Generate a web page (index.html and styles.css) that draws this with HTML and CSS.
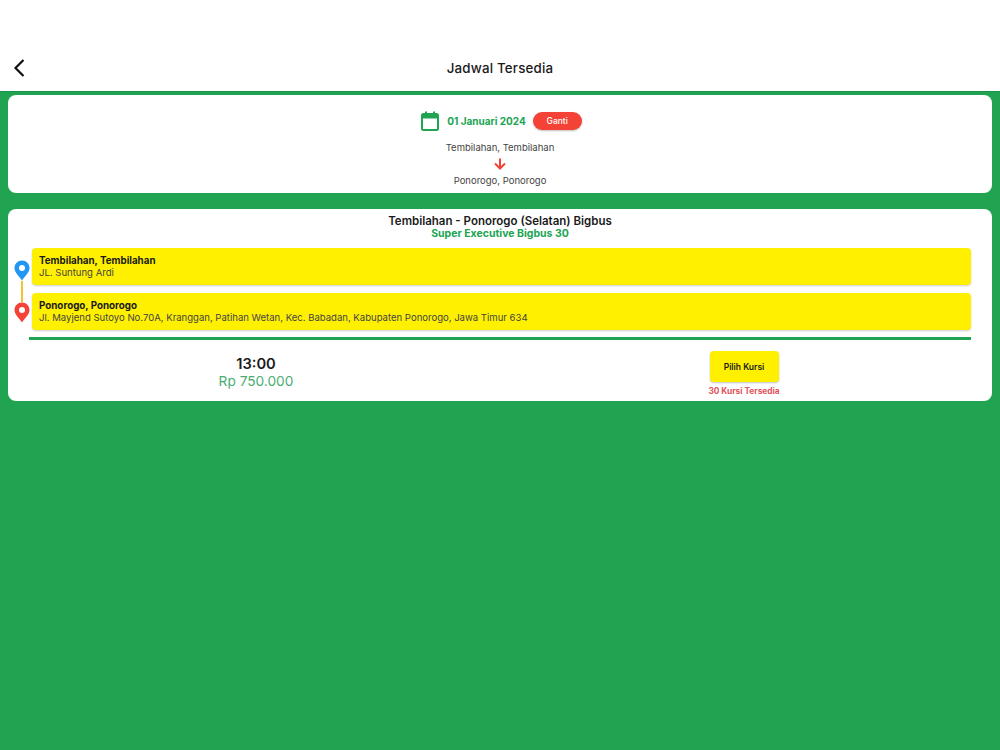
FILE: index.html
```html
<!DOCTYPE html>
<html lang="en">
<head>
  <meta charset="UTF-8">
  <title>Jadwal Tersedia</title>
  <link rel="stylesheet" href="styles.css">
</head>
<body>
  <header class="topbar">
    <svg class="backIcon" width="24" height="24" viewBox="0 0 24 24">
      <path d="M16.5 4 L8.5 12 L16.5 20" fill="none" stroke="#111" stroke-width="2.2"/>
    </svg>
    <h1 class="topbarTitle">Jadwal Tersedia</h1>
  </header>

  <section class="card dateCard">
    <div class="dateRow">
      <svg class="calIcon" width="24" height="24" viewBox="0 0 24 24">
        <rect x="4" y="5" width="16" height="16" rx="1.5" fill="none" stroke="#20a452" stroke-width="2"/>
        <rect x="4" y="5" width="16" height="4.5" fill="#20a452"/>
        <rect x="7" y="2.5" width="2" height="4" fill="#20a452"/>
        <rect x="15" y="2.5" width="2" height="4" fill="#20a452"/>
      </svg>
      <span class="dateText">01 Januari 2024</span>
      <span class="gantiBtn">Ganti</span>
    </div>
    <div class="routeText routeFrom">Tembilahan, Tembilahan</div>
    <svg class="arrowIcon" width="14" height="14" viewBox="0 0 14 14">
      <path d="M7 1.5 V11.5 M2 6.5 L7 11.5 L12 6.5" fill="none" stroke="#f44336" stroke-width="2"/>
    </svg>
    <div class="routeText routeTo">Ponorogo, Ponorogo</div>
  </section>

  <section class="card tripCard">
    <div class="tripTitle">Tembilahan - Ponorogo (Selatan) Bigbus</div>
    <div class="tripClass">Super Executive Bigbus 30</div>

    <div class="stops">
      <div class="pinCol">
        <svg class="pin" width="16" height="21" viewBox="0 0 16 21">
          <path d="M8 0.5 C3.8 0.5 0.5 3.8 0.5 8 C0.5 12.5 5 16 8 20.5 C11 16 15.5 12.5 15.5 8 C15.5 3.8 12.2 0.5 8 0.5 Z" fill="#2196f3"/>
          <circle cx="8" cy="8" r="3" fill="#fff"/>
        </svg>
        <div class="pinLine"></div>
        <svg class="pin" width="16" height="21" viewBox="0 0 16 21">
          <path d="M8 0.5 C3.8 0.5 0.5 3.8 0.5 8 C0.5 12.5 5 16 8 20.5 C11 16 15.5 12.5 15.5 8 C15.5 3.8 12.2 0.5 8 0.5 Z" fill="#f44336"/>
          <circle cx="8" cy="8" r="3" fill="#fff"/>
        </svg>
      </div>
      <div class="stopList">
        <div class="stop">
          <div class="stopName">Tembilahan, Tembilahan</div>
          <div class="stopAddr">JL. Suntung Ardi</div>
        </div>
        <div class="stop">
          <div class="stopName">Ponorogo, Ponorogo</div>
          <div class="stopAddr">Jl. Mayjend Sutoyo No.70A, Kranggan, Patihan Wetan, Kec. Babadan, Kabupaten Ponorogo, Jawa Timur 634</div>
        </div>
      </div>
    </div>

    <div class="divider"></div>

    <div class="tripBottom">
      <div class="tripCol">
        <div class="tripTime">13:00</div>
        <div class="tripPrice">Rp 750.000</div>
      </div>
      <div class="tripCol">
        <div class="pilihBtn">Pilih Kursi</div>
        <div class="seatText">30 Kursi Tersedia</div>
      </div>
    </div>
  </section>
</body>
</html>
```

FILE: styles.css
```css
*{
  box-sizing: border-box;
}
html, body{
  height: 100%;
}
body{
  margin: 0;
  background-color: #20a452;
  font-family: Inter, "Liberation Sans", sans-serif;
  color: #1a1a1a;
}
.topbar{
  height: 92px;
  padding-top: 44px;
  background-color: #fff;
  display: flex;
  align-items: center;
  justify-content: center;
  position: relative;
  border-bottom: 1px solid #1c9149;
}
.backIcon{
  position: absolute;
  left: 7px;
  top: 56px;
}
.topbarTitle{
  margin: 0;
  font-size: 13.3px;
  font-weight: 500;
  letter-spacing: 0.2px;
}
.card{
  background-color: #fff;
  margin: 0 8px;
  border-radius: 8px;
}
.dateCard{
  margin-top: 3px;
  height: 98px;
  padding-top: 16px;
  display: flex;
  flex-direction: column;
  align-items: center;
}
.dateRow{
  display: flex;
  align-items: center;
  height: 20px;
}
.calIcon{
  margin-right: 5px;
}
.dateText{
  font-size: 10px;
  font-weight: 700;
  color: #20a452;
  margin-right: 7px;
}
.gantiBtn{
  width: 49px;
  height: 18px;
  border-radius: 9px;
  background-color: #f44336;
  color: #fff;
  font-size: 8.5px;
  font-weight: 500;
  display: flex;
  align-items: center;
  justify-content: center;
  box-shadow: 0 1px 2px rgba(0,0,0,.25);
}
.routeText{
  font-size: 9.5px;
  line-height: 14px;
  color: #444;
}
.routeFrom{
  margin-top: 10px;
}
.arrowIcon{
  margin-top: 2px;
}
.routeTo{
  margin-top: 3px;
}
.tripCard{
  margin-top: 16px;
  height: 192px;
  padding-top: 6px;
}
.tripTitle{
  text-align: center;
  font-size: 11.5px;
  line-height: 12px;
  font-weight: 600;
}
.tripClass{
  text-align: center;
  font-size: 10.5px;
  line-height: 13px;
  font-weight: 700;
  color: #20a452;
}
.stops{
  display: flex;
  margin-top: 8px;
  padding: 0 21px 0 6px;
}
.pinCol{
  width: 16px;
  margin-right: 2px;
  padding-top: 12px;
  display: flex;
  flex-direction: column;
  align-items: center;
}
.pin{
  display: block;
  flex: none;
}
.pinLine{
  width: 2px;
  height: 21px;
  background-color: #f2c230;
}
.stopList{
  flex: 1;
  display: flex;
  flex-direction: column;
  gap: 8px;
}
.stop{
  height: 37px;
  padding: 7px 7px;
  background-color: #fff000;
  border-radius: 4px;
  box-shadow: 0 1px 2px rgba(0,0,0,.2);
  line-height: 12px;
}
.stopName{
  font-size: 9.8px;
  font-weight: 700;
}
.stopAddr{
  font-size: 9.56px;
  color: #444;
}
.divider{
  height: 3px;
  margin: 7px 21px 0 21px;
  background-color: #20a452;
}
.tripBottom{
  display: flex;
  padding: 0 4px;
}
.tripCol{
  flex: 1;
  display: flex;
  flex-direction: column;
  align-items: center;
}
.tripTime{
  margin-top: 16px;
  font-size: 14.7px;
  line-height: 17px;
  font-weight: 600;
}
.tripPrice{
  font-size: 13.7px;
  line-height: 16px;
  color: #4aad72;
}
.pilihBtn{
  margin-top: 11px;
  width: 69px;
  height: 31px;
  background-color: #fff000;
  border-radius: 4px;
  box-shadow: 0 1px 2px rgba(0,0,0,.25);
  font-size: 8.5px;
  font-weight: 600;
  display: flex;
  align-items: center;
  justify-content: center;
}
.seatText{
  margin-top: 4px;
  font-size: 8.3px;
  line-height: 11px;
  font-weight: 700;
  color: #e2525c;
}
```
